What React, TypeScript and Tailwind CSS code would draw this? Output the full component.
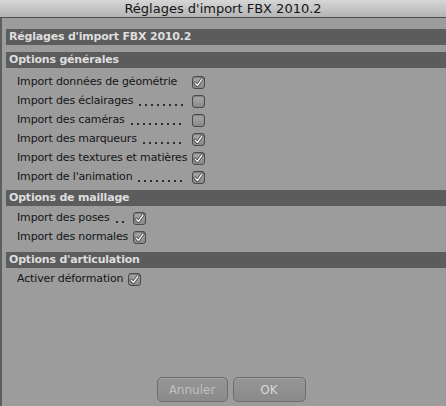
import { FC } from "react";

type Option = { label: string; checked: boolean; noDots?: boolean };

const groups: { title: string; pt: string; pb: string; options: Option[] }[] = [
  {
    title: "Options générales",
    pt: "pt-[5px]",
    pb: "pb-[3px]",
    options: [
      { label: "Import données de géométrie", checked: true, noDots: true },
      { label: "Import des éclairages", checked: false },
      { label: "Import des caméras", checked: false },
      { label: "Import des marqueurs", checked: true },
      { label: "Import des textures et matières", checked: true },
      { label: "Import de l'animation", checked: true },
    ],
  },
  {
    title: "Options de maillage",
    pt: "pt-[3px]",
    pb: "pb-[5px]",
    options: [
      { label: "Import des poses", checked: true },
      { label: "Import des normales", checked: true },
    ],
  },
  {
    title: "Options d'articulation",
    pt: "pt-[2px]",
    pb: "pb-0",
    options: [{ label: "Activer déformation", checked: true }],
  },
];

const Checkbox: FC<{ checked: boolean }> = ({ checked }) => (
  <span className="w-[13px] h-[13px] rounded-[3px] border border-[#4a4a4a] bg-gradient-to-b from-[#a8a8a8] to-[#8a8a8a] flex items-center justify-center shadow-[inset_0_1px_1px_rgba(0,0,0,0.25)]">
    {checked && (
      <svg width="11" height="11" viewBox="0 0 11 11">
        <path d="M2 6 L4.5 8.5 L9 2" fill="none" stroke="#3a3a3a" strokeWidth="3" strokeLinecap="round" strokeLinejoin="round" />
        <path d="M2 6 L4.5 8.5 L9 2" fill="none" stroke="#f4f4f4" strokeWidth="1.4" strokeLinecap="round" strokeLinejoin="round" />
      </svg>
    )}
  </span>
);

const SectionBar: FC<{ title: string }> = ({ title }) => (
  <div className="h-[16px] bg-[#5c5c5c] text-[#dedede] text-[11px] font-bold pl-[3px] leading-[16px] tracking-[-0.2px] whitespace-nowrap">
    {title}
  </div>
);

export default function App() {
  return (
    <div
      className="w-[446px] h-[406px] bg-[#9c9c9c] flex flex-col overflow-hidden"
      style={{ fontFamily: '"DejaVu Sans", "Liberation Sans", sans-serif' }}
    >
      <div className="h-[18px] shrink-0 bg-gradient-to-b from-[#d6d6d6] to-[#b4b4b4] border-b border-[#4e4e4e] flex items-center justify-center text-[13px] text-[#141414]">
        Réglages d'import FBX 2010.2
      </div>
      <div className="flex-1 flex flex-col border-l-2 border-[#5e5e5e] pl-[4px] pt-[11px]">
        <SectionBar title="Réglages d'import FBX 2010.2" />
        <div className="h-[7px]" />
        {groups.map((g) => (
          <div key={g.title}>
            <SectionBar title={g.title} />
            <div className={`${g.pt} ${g.pb} pl-[11px]`}>
              <div className="grid w-fit grid-cols-[auto_auto] items-center gap-x-[5px]">
                {g.options.map((o) => (
                  <div key={o.label} className="contents">
                    <div className="h-[19px] flex items-center text-[11px] tracking-[-0.15px] text-[#151515] whitespace-nowrap">
                      <span>{o.label}</span>
                      <span className="relative flex-1 self-stretch">
                        {!o.noDots && (
                          <span className="absolute left-[4px] right-[2px] bottom-[5px] h-[2px] bg-[radial-gradient(circle,#2e2e2e_0.75px,transparent_1.1px)] bg-[length:6px_2px] bg-repeat-x" />
                        )}
                      </span>
                    </div>
                    <Checkbox checked={o.checked} />
                  </div>
                ))}
              </div>
            </div>
          </div>
        ))}
        <div className="flex-1" />
        <div className="flex justify-center gap-[5px] pb-[4px] pl-[10px]">
          <button className="w-[71px] h-[25px] rounded-[5px] border border-[#6c6c6c] bg-gradient-to-b from-[#959595] to-[#8b8b8b] text-[12px] text-[#c0c0c0] shadow-[inset_0_1px_0_rgba(255,255,255,0.15)]">
            Annuler
          </button>
          <button className="w-[73px] h-[25px] rounded-[5px] border border-[#6c6c6c] bg-gradient-to-b from-[#959595] to-[#8b8b8b] text-[12px] text-[#d8d8d8] shadow-[inset_0_1px_0_rgba(255,255,255,0.15)]">
            OK
          </button>
        </div>
      </div>
    </div>
  );
}
